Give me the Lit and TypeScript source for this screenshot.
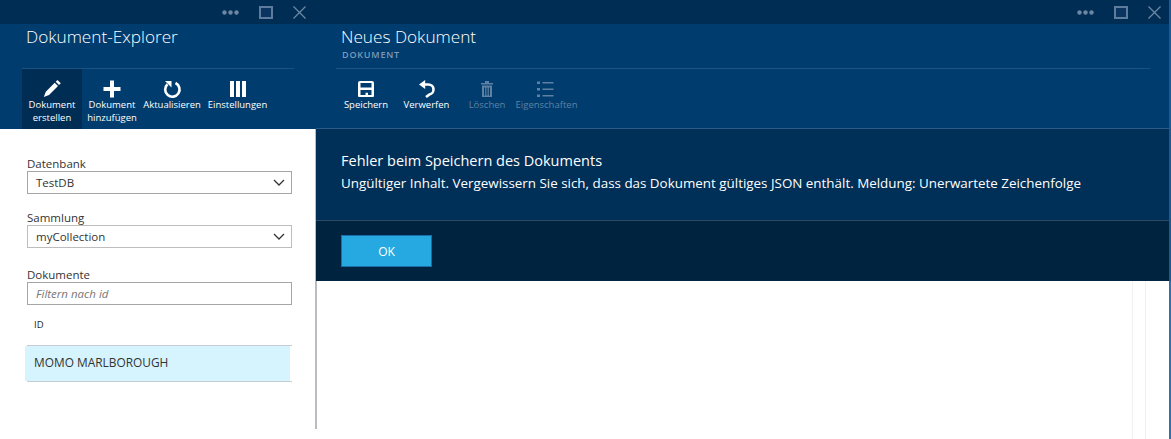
import { LitElement, html, css, svg } from "lit";
import { customElement } from "lit/decorators.js";

const chrome = html`
  <div class="chrome">
    <svg width="17" height="5" viewBox="0 0 17 5"><circle cx="2.5" cy="2.5" r="2.2"/><circle cx="8.5" cy="2.5" r="2.2"/><circle cx="14.5" cy="2.5" r="2.2"/></svg>
    <svg class="max" width="14" height="13" viewBox="0 0 14 13"><rect x="1" y="1" width="12" height="11" /></svg>
    <svg class="close" width="13" height="13" viewBox="0 0 13 13"><path d="M0.5 0.5 L12.5 12.5 M12.5 0.5 L0.5 12.5" /></svg>
  </div>
`;

const icons = {
  pencil: svg`<path d="M16.5 2 L19.8 5.3 L18 7.1 L14.7 3.8 Z M13.7 4.8 L17 8.1 L8 17 L2.8 19 L4.8 13.8 Z" fill="currentColor"/>`,
  plus: svg`<path d="M9 2.5 H13 V9 H19.5 V13 H13 V19.5 H9 V13 H2.5 V9 H9 Z" fill="currentColor"/>`,
  refresh: svg`<path d="M6.5 6.2 A7.2 7.2 0 1 0 14.5 5" fill="none" stroke="currentColor" stroke-width="2.6"/><path d="M4 3 L10.5 3 L10.5 9.5 Z" fill="currentColor"/>`,
  columns: svg`<path d="M3 3 H7 V19 H3 Z M9 3 H13 V19 H9 Z M15 3 H19 V19 H15 Z" fill="currentColor"/>`,
  save: svg`<path fill-rule="evenodd" d="M3 5 Q3 3 5 3 H17 Q19 3 19 5 V18 Q19 19 18 19 H4 Q3 19 3 18 Z M5.5 5 V9.5 H16.5 V5 Z M5.5 12 V17 H10.5 V14.8 H13 V17 H16.5 V12 Z" fill="currentColor"/>`,
  undo: svg`<path d="M8 6.5 H12.5 A5 5 0 0 1 13.5 16.4 L10 19" fill="none" stroke="currentColor" stroke-width="2.6"/><path d="M9.2 2 V11 L3 6.5 Z" fill="currentColor"/>`,
  trash: svg`<path fill-rule="evenodd" d="M9 3 H13 V5 H17 V6.5 H5 V5 H9 Z M6 7.5 H16 V19 H6 Z M8 9.5 V17.5 H9.2 V9.5 Z M10.4 9.5 V17.5 H11.6 V9.5 Z M12.8 9.5 V17.5 H14 V9.5 Z" fill="currentColor"/>`,
  list: svg`<path d="M1 3.5 H4 V6 H1 Z M1 10 H4 V12.5 H1 Z M1 16.5 H4 V19 H1 Z M6.5 4 H17.5 V5.5 H6.5 Z M6.5 10.5 H17.5 V12 H6.5 Z M6.5 17 H17.5 V18.5 H6.5 Z" fill="currentColor"/>`,
};

function tool(icon: keyof typeof icons, label: unknown, width: number, cls = "") {
  return html`
    <div class="tool ${cls}" style="width:${width}px">
      <svg width="22" height="22" viewBox="0 0 22 22">${icons[icon]}</svg>
      <span>${label}</span>
    </div>
  `;
}

const chevron = html`<svg class="chev" width="12" height="7" viewBox="0 0 12 7"><path d="M1 1 L6 6 L11 1" /></svg>`;

@customElement("app-root")
export class AppRoot extends LitElement {
  static styles = css`
    :host {
      display: flex;
      width: 1171px;
      height: 439px;
      overflow: hidden;
      background: #fff;
      font-family: "Open Sans", "Noto Sans", Arial, sans-serif;
    }
    .left {
      width: 316px;
      flex: none;
      display: flex;
      flex-direction: column;
    }
    .right {
      flex: 1;
      min-width: 0;
      display: flex;
      flex-direction: column;
    }
    .right > * {
      border-right: 2px solid #1c5a94;
    }
    .chrome {
      height: 24px;
      flex: none;
      box-sizing: border-box;
      padding: 1px 10px 0 0;
      background: #002d54;
      display: flex;
      justify-content: flex-end;
      align-items: center;
      gap: 20px;
    }
    .right .chrome {
      padding-right: 8px;
    }
    .chrome svg {
      fill: #6d87a3;
    }
    .chrome .max {
      fill: #0b3560;
      stroke: #5e7d9e;
      stroke-width: 2;
    }
    .chrome .close {
      fill: none;
      stroke: #6d87a3;
      stroke-width: 1.3;
    }
    .head {
      background: #003c6e;
      color: #fff;
      height: 105px;
      padding: 0 22px;
      box-sizing: border-box;
      display: flex;
      flex-direction: column;
    }
    .right .head {
      padding: 0 19px 0 20px;
      height: 104px;
    }
    .title {
      font-size: 17.2px;
      font-weight: 300;
      line-height: 26px;
      padding-left: 4px;
      height: 44px;
      flex: none;
      box-sizing: border-box;
      white-space: nowrap;
    }
    .right .title {
      padding-left: 5px;
    }
    .sub {
      display: block;
      font-size: 9px;
      line-height: 10px;
      font-weight: 600;
      letter-spacing: 0.8px;
      color: #7d9ab8;
      padding-left: 1px;
    }
    .tools {
      display: flex;
      border-top: 1px solid #1b5283;
      height: 60px;
    }
    .tool {
      flex: none;
      display: flex;
      flex-direction: column;
      align-items: center;
      box-sizing: border-box;
      padding-top: 9px;
      font-size: 9.5px;
      line-height: 12.5px;
      text-align: center;
      color: #fff;
      white-space: nowrap;
    }
    .tool svg {
      margin-bottom: -1px;
      flex: none;
    }
    .tool.active {
      background: #002d54;
    }
    .tool.off {
      color: #5f82a4;
    }
    .form-wrap {
      flex: 1;
      display: flex;
      min-height: 0;
    }
    .form {
      flex: 1;
      padding: 27px 23px 0 27px;
      font-size: 11.5px;
      color: #333;
    }
    .rule {
      width: 1px;
      height: 300px;
      flex: none;
      background: #b9bdc2;
    }
    label {
      display: block;
      line-height: 16px;
      height: 14px;
    }
    .box {
      height: 23px;
      box-sizing: border-box;
      border: 1px solid #a6a6a6;
      display: flex;
      align-items: center;
      justify-content: space-between;
      padding: 0 6px 0 8px;
      margin: 1px 0 0;
      color: #333;
    }
    .box.second {
      border-color: #bdbdbd;
    }
    .box i {
      color: #777;
      font-size: 11.5px;
    }
    .chev {
      fill: none;
      stroke: #333;
      stroke-width: 1.3;
    }
    .gap1 {
      height: 16px;
    }
    .gap2 {
      height: 19px;
    }
    .idhead {
      font-size: 9.5px;
      height: 40px;
      line-height: 14px;
      padding: 13px 0 0 7px;
      box-sizing: border-box;
      color: #222;
    }
    .rowline {
      height: 37px;
      box-sizing: border-box;
      border-top: 1px solid #c6cccf;
      border-bottom: 1px solid #c6cccf;
    }
    .row {
      margin-left: -2px;
      width: 256px;
      height: 35px;
      background: #d6f4fd;
      padding-left: 9px;
      line-height: 32px;
      font-size: 11.9px;
      white-space: nowrap;
    }
    .msg {
      background: #002f58;
      height: 93px;
      flex: none;
      box-sizing: border-box;
      border-top: 1px solid #2a5a88;
      border-bottom: 1px solid #2f4a66;
      color: #fff;
      padding: 20px 0 0 25px;
      font-size: 13.4px;
      line-height: 23px;
      white-space: nowrap;
    }
    .msg b {
      display: block;
      font-weight: 400;
      font-size: 14.5px;
    }
    .foot {
      background: #002340;
      height: 60px;
      flex: none;
      padding: 14px 0 0 25px;
      box-sizing: border-box;
    }
    .ok {
      display: block;
      width: 91px;
      height: 32px;
      padding: 0;
      box-sizing: border-box;
      background: #25a9e0;
      border: 1px solid #1a6da8;
      color: #fff;
      font: 12px "Open Sans", sans-serif;
    }
    .right > .blank {
      flex: 1;
      display: flex;
      border-right-color: #2a72b5;
      background: #fff;
    }
    .edge {
      width: 1px;
      height: 148px;
      background: #b9bdc2;
      margin-right: auto;
    }
    .line {
      width: 1px;
      background: #f1f1f1;
      margin-right: 12px;
    }
    .line + .line {
      margin-right: 23px;
    }
  `;

  render() {
    return html`
      <section class="left">
        ${chrome}
        <div class="head">
          <div class="title">Dokument-Explorer</div>
          <div class="tools">
            ${tool("pencil", html`Dokument<br />erstellen`, 60, "active")}
            ${tool("plus", html`Dokument<br />hinzufügen`, 60)}
            ${tool("refresh", "Aktualisieren", 60)}
            ${tool("columns", "Einstellungen", 71)}
          </div>
        </div>
        <div class="form-wrap">
          <div class="form">
            <label>Datenbank</label>
            <div class="box">TestDB ${chevron}</div>
            <div class="gap1"></div>
            <label>Sammlung</label>
            <div class="box second">myCollection ${chevron}</div>
            <div class="gap2"></div>
            <label>Dokumente</label>
            <div class="box"><i>Filtern nach id</i></div>
            <div class="idhead">ID</div>
            <div class="rowline"><div class="row">MOMO MARLBOROUGH</div></div>
          </div>
          <div class="rule"></div>
        </div>
      </section>
      <section class="right">
        ${chrome}
        <div class="head">
          <div class="title">
            Neues Dokument
            <span class="sub">DOKUMENT</span>
          </div>
          <div class="tools">
            ${tool("save", "Speichern", 60)}
            ${tool("undo", "Verwerfen", 61)}
            ${tool("trash", "Löschen", 60, "off")}
            ${tool("list", "Eigenschaften", 59, "off")}
          </div>
        </div>
        <div class="msg">
          <b>Fehler beim Speichern des Dokuments</b>
          Ungültiger Inhalt. Vergewissern Sie sich, dass das Dokument gültiges JSON enthält. Meldung: Unerwartete Zeichenfolge
        </div>
        <div class="foot"><button class="ok">OK</button></div>
        <div class="blank"><div class="edge"></div><div class="line"></div><div class="line"></div></div>
      </section>
    `;
  }
}
